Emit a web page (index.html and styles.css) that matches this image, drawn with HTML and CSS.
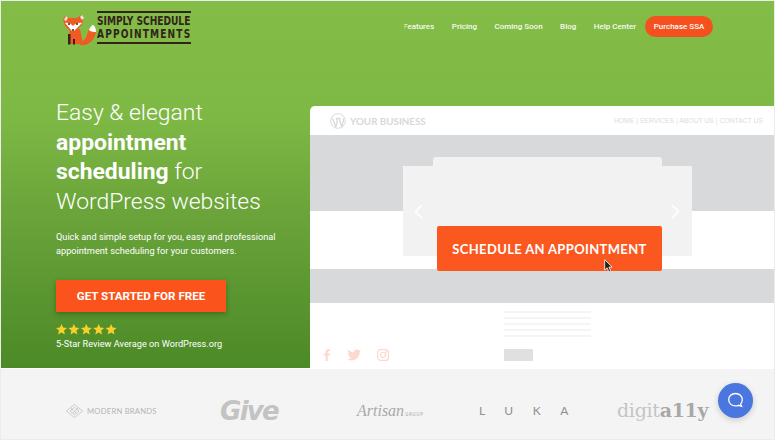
FILE: index.html
```html
<!DOCTYPE html>
<html lang="en">
<head>
<meta charset="utf-8">
<title>Simply Schedule Appointments</title>
<link rel="stylesheet" href="styles.css">
</head>
<body>
<div class="page">
  <section class="hero">
    <header class="topbar">
      <a class="logo">
        <svg class="fox" width="35" height="34" viewBox="0 0 35 34">
          <path d="M18 33c8 1 15-4 16-14l-5-3c-4 1-3 9-7 12l-5 3z" fill="#f15a22"/>
          <path d="M27 18c1-3 3-5 4-5 2 1 3 4 3 7-2 0-5 0-7-2z" fill="#fff"/>
          <path d="M8 17h10l3 15H6z" fill="#f15a22"/>
          <path d="M6 22h2.500v10.500H6zM11 27h2v5.500h-2z" fill="#33231c"/>
          <path d="M1 8l2-4 4 2h8l4-3 2 5-1 5-8 7h-3L3 14z" fill="#f15a22"/>
          <path d="M2 8l2-4 2 2-2 3zM20 8l-2-3 2-2 2 3z" fill="#e9e6d8"/>
          <path d="M3 11c3-1 6 0 8 3 2-3 6-4 9-3l-8 8h-2z" fill="#fff"/>
          <circle cx="7" cy="12" r="1" fill="#33231c"/><circle cx="15" cy="12" r="1" fill="#33231c"/>
          <circle cx="11" cy="18" r="1" fill="#33231c"/>
        </svg>
        <span class="wordmark"><span class="wm-line">SIMPLY SCHEDULE</span><span class="wm-line wm-wide">APPOINTMENTS</span></span>
      </a>
      <nav class="nav">
        <a class="clip-f">Features</a>
        <a>Pricing</a>
        <a>Coming Soon</a>
        <a>Blog</a>
        <a>Help Center</a>
        <a class="pill">Purchase SSA</a>
      </nav>
    </header>
    <div class="hero-body">
      <div class="copy">
        <h1><span class="h-line">Easy &amp; elegant</span> <span class="h-line"><b>appointment</b></span> <span class="h-line"><b>scheduling</b> for</span> <span class="h-line">WordPress websites</span></h1>
        <p class="lead"><span class="l-line">Quick and simple setup for you, easy and professional</span> <span class="l-line">appointment scheduling for your customers.</span></p>
        <a class="cta">GET STARTED FOR FREE</a>
        <div class="stars">
          <svg width="62" height="11" viewBox="0 0 62 11" fill="#f7d02c">
            <path id="s" d="M5.5 0l1.600 3.600 3.900.4-3 2.600.9 3.900-3.400-2-3.400 2 .9-3.900-3-2.600 3.900-.4z"/>
            <use href="#s" x="12.400"/><use href="#s" x="24.800"/><use href="#s" x="37.200"/><use href="#s" x="49.600"/>
          </svg>
        </div>
        <p class="review">5-Star Review Average on WordPress.org</p>
      </div>
      <div class="mock">
        <div class="mock-head">
          <div class="biz">
            <svg width="16" height="16" viewBox="0 0 16 16"><circle cx="8" cy="8" r="7.300" fill="none" stroke="#d9d9d9" stroke-width="1"/><path d="M2.700 5.500l3 8 1.600-4.600-1-3M6 5.500h4.500M9 5.500l2.700 8 1.700-5.500c.3-1.200-.2-2-.7-2.700" fill="none" stroke="#d9d9d9" stroke-width="1.300"/></svg>
            <span>YOUR BUSINESS</span>
          </div>
          <div class="mock-links">HOME | SERVICES | ABOUT US | CONTACT US</div>
        </div>
        <div class="band band-a"></div>
        <div class="gap-white"></div>
        <div class="band band-b"></div>
        <div class="mock-foot">
          <div class="social">
            <svg width="8" height="12" viewBox="0 0 8 12"><path d="M2.500 12V6.500H.8V4.500h1.700V3c0-1.800 1-2.800 2.600-2.800H7v2H5.700c-.7 0-1 .3-1 1v1.300H7l-.3 2H4.700V12z" fill="#fbd9cd"/></svg>
            <svg width="14" height="12" viewBox="0 0 14 12"><path d="M14 1.500c-.5.3-1 .4-1.600.5.600-.4 1-.9 1.200-1.500-.5.300-1.100.6-1.800.7A2.900 2.900 0 0 0 6.900 3.300C4.600 3.200 2.500 2.100 1.100.4.300 1.700.7 3.400 2 4.200c-.5 0-.9-.100-1.300-.3 0 1.400 1 2.600 2.300 2.800-.4.100-.9.100-1.300 0 .4 1.200 1.500 2 2.700 2A5.800 5.800 0 0 1 .1 10a8.200 8.200 0 0 0 12.600-7.300c.5-.3 1-.8 1.300-1.200z" fill="#fbd9cd"/></svg>
            <svg width="12" height="12" viewBox="0 0 12 12" fill="none" stroke="#fbd9cd" stroke-width="1.200"><rect x=".6" y=".6" width="10.800" height="10.800" rx="3"/><circle cx="6" cy="6" r="2.500"/><circle cx="9" cy="3" r=".4"/></svg>
          </div>
          <div class="copy-lines">
            <i></i><i></i><i></i><i></i><i></i>
            <u></u>
          </div>
        </div>
        <div class="panel panel-side"></div>
        <div class="panel panel-main"></div>
        <svg class="arrow arrow-l" width="9" height="15" viewBox="0 0 9 15"><path d="M8 1L1.500 7.500 8 14" fill="none" stroke="#fff" stroke-width="1.500"/></svg>
        <svg class="arrow arrow-r" width="9" height="15" viewBox="0 0 9 15"><path d="M1 1l6.500 6.500L1 14" fill="none" stroke="#fff" stroke-width="1.500"/></svg>
        <a class="schedule">SCHEDULE AN APPOINTMENT</a>
        <svg class="cursor" width="9" height="14" viewBox="0 0 9 14"><path d="M.7.7v10.300l2.400-2.200 1.800 4.200 1.800-.8-1.800-4.100h3.200z" fill="#222" stroke="#fff" stroke-width=".8"/></svg>
      </div>
    </div>
  </section>
  <section class="brands">
    <div class="brand modern">
      <svg width="17" height="14" viewBox="0 0 24 15" preserveAspectRatio="none" fill="none" stroke="#bdbdbd" stroke-width=".9"><path d="M12 .5l11.500 7L12 14.500.5 7.500z"/><path d="M12 3.500l6.500 4-6.500 4-6.500-4z"/><path d="M6.500 4l8 6M17.500 4l-8 6"/></svg>
      <span>MODERN BRANDS</span>
    </div>
    <div class="brand give">Give</div>
    <div class="brand artisan"><span class="a-script">Artisan</span><span class="a-small">GROUP</span></div>
    <div class="brand luka">LUKA</div>
    <div class="brand digit">digit<b>a11y</b></div>
  </section>
  <a class="chat">
    <svg width="17" height="17" viewBox="0 0 17 17"><path d="M8.500 1.500c4 0 6.800 2.700 6.800 6.200 0 1.700-.6 3.200-1.700 4.200l1 2.400-3.200-1c-.9.400-1.900.6-2.900.6-4 0-6.800-2.700-6.800-6.200s2.800-6.200 6.800-6.200z" fill="none" stroke="#fff" stroke-width="1.300"/></svg>
  </a>
</div>
</body>
</html>
```

FILE: styles.css
```css
* { box-sizing: border-box; }
html, body { margin: 0; padding: 0; }
body { font-family: Roboto, "Liberation Sans", sans-serif; background: #fff; }
a { text-decoration: none; color: inherit; }

.page {
  position: relative;
  width: 775px;
  height: 440px;
  overflow: hidden;
  border: 1px solid #ececec;
  background: #fff;
}

.hero {
  height: 367px;
  background: linear-gradient(180deg, #83bd47 0%, #7fb945 30%, #659f37 65%, #4c8a27 100%);
  display: flex;
  flex-direction: column;
}

.topbar {
  height: 105px;
  flex: none;
  display: flex;
  align-items: flex-start;
  justify-content: space-between;
  padding: 10px 61px 0 61px;
}

.logo { display: flex; align-items: flex-start; gap: 0; }
.fox { display: block; margin-top: 1px; }
.wordmark {
  display: flex;
  flex-direction: column;
  justify-content: center;
  gap: 1px;
  width: 94px;
  height: 33px;
  border-top: 2px solid #33231c;
  border-bottom: 2px solid #33231c;
  font-family: "DejaVu Sans Condensed", "DejaVu Sans", sans-serif;
  font-weight: 700;
  font-size: 12px;
  line-height: 12px;
  color: #33231c;
  white-space: nowrap;
}
.wm-line { display: block; transform: scaleX(.84); transform-origin: left center; }
.wm-wide { letter-spacing: 1.350px; }

.nav {
  display: flex;
  align-items: center;
  gap: 17.500px;
  height: 21px;
  margin-top: 5px;
  font-size: 8px;
  font-weight: 500;
  color: #f7faf2;
}
.pill {
  margin-left: -8.500px;
  width: 68px;
  height: 21px;
  border-radius: 11px;
  background: #f5511e;
  color: #fff;
  display: flex;
  align-items: center;
  justify-content: center;
}
.clip-f { clip-path: inset(0 0 0 1.500px); }

.hero-body { flex: 1; display: flex; min-height: 0; }

.copy { width: 309px; flex: none; padding: 0 0 0 55px; color: #fff; }
h1 {
  margin: -8px 0 0;
  width: 225px;
  font-size: 22.900px;
  line-height: 29.500px;
  font-weight: 300;
}
h1 b { font-weight: 700; }
.h-line, .l-line { display: block; white-space: nowrap; }
.lead {
  margin: 14px 0 0;
  width: 235px;
  font-size: 9.200px;
  line-height: 14px;
}
.cta {
  display: flex;
  align-items: center;
  justify-content: center;
  margin-top: 22px;
  width: 170px;
  height: 32px;
  background: #fa541c;
  color: #fff;
  font-weight: 700;
  font-size: 11.600px;
  box-shadow: 0 2px 5px rgba(40, 60, 10, .45);
}
.stars { margin-top: 12px; height: 11px; line-height: 0; }
.review { margin: 2px 0 0; font-size: 9.200px; line-height: 14px; }

.mock {
  position: relative;
  flex: 1;
  display: flex;
  flex-direction: column;
  background: #fff;
  border-top-left-radius: 5px;
}
.mock-head {
  height: 29px;
  flex: none;
  display: flex;
  align-items: center;
  justify-content: space-between;
  padding: 0 11px 0 20px;
}
.biz {
  display: flex;
  align-items: center;
  gap: 4px;
  color: #d8d8d8;
  font-family: Lato, sans-serif;
  font-weight: 700;
  font-size: 9.800px;
}
.mock-links { font-size: 6.800px; color: #dcdcdc; font-family: "Liberation Sans", sans-serif; }
.band { background: #d8d9db; flex: none; }
.band-a { height: 76px; }
.gap-white { height: 58px; flex: none; }
.band-b { height: 34px; }
.mock-foot { flex: 1; display: flex; position: relative; padding-left: 194px; }
.copy-lines { width: 87px; padding-top: 8px; display: flex; flex-direction: column; gap: 4px; }
.copy-lines i { height: 2px; background: #f5f5f5; display: block; }
.copy-lines u { width: 29px; height: 12px; background: #e0e0e0; display: block; margin-top: 8px; }
.social {
  position: absolute;
  left: 13px;
  top: 46px;
  display: flex;
  align-items: center;
  gap: 16px;
}

.panel { position: absolute; background: #f2f2f2; }
.panel-side { left: 93px; top: 60px; width: 289px; height: 90px; }
.panel-main { left: 123px; top: 51px; width: 229px; height: 80px; border-radius: 3px 3px 0 0; }
.arrow { position: absolute; top: 98px; }
.arrow-l { left: 104px; }
.arrow-r { left: 361px; }
.schedule {
  position: absolute;
  left: 127px;
  top: 120px;
  width: 225px;
  height: 45px;
  border-radius: 2px;
  background: #fa581f;
  color: #fff;
  display: flex;
  align-items: center;
  justify-content: center;
  font-family: Lato, sans-serif;
  font-weight: 700;
  font-size: 13px;
  letter-spacing: .35px;
}
.cursor { position: absolute; left: 294px; top: 153px; }

.brands {
  height: 71px;
  margin-top: 1px;
  background: #f4f4f4;
  position: relative;
  display: flex;
  align-items: center;
  padding: 12px 0 0 65px;
  color: #bdbdbd;
}
.brand { flex: none; white-space: nowrap; }
.modern { display: flex; align-items: center; gap: 4px; width: 154px; font-size: 7.700px; color: #b5b5b5; font-family: Lato, sans-serif; letter-spacing: .2px; }
.give { width: 137px; font-family: "DejaVu Sans", sans-serif; font-weight: 700; font-size: 26px; font-style: italic; letter-spacing: -1.700px; line-height: 26px; color: #c3c3c3; }
.artisan { width: 122px; display: flex; align-items: flex-end; color: #a9a9a9; }
.a-script { font-family: "Liberation Serif", serif; font-style: italic; font-size: 16px; }
.a-small { font-size: 4.500px; letter-spacing: .8px; margin: 0 0 3px 1px; }
.luka { width: 138px; font-family: Lato, sans-serif; font-size: 12px; letter-spacing: 19.500px; color: #8f8f8f; }
.digit { font-family: "DejaVu Serif", serif; font-size: 19px; color: #c4c4c4; letter-spacing: -.3px; margin-top: -2px; }
.digit b { color: #a8a8a8; font-weight: 700; }

.chat {
  position: absolute;
  left: 717px;
  top: 382px;
  width: 35px;
  height: 35px;
  border-radius: 50%;
  background: #4a76df;
  box-shadow: 0 2px 6px rgba(0, 0, 0, .18);
  display: flex;
  align-items: center;
  justify-content: center;
}
```
